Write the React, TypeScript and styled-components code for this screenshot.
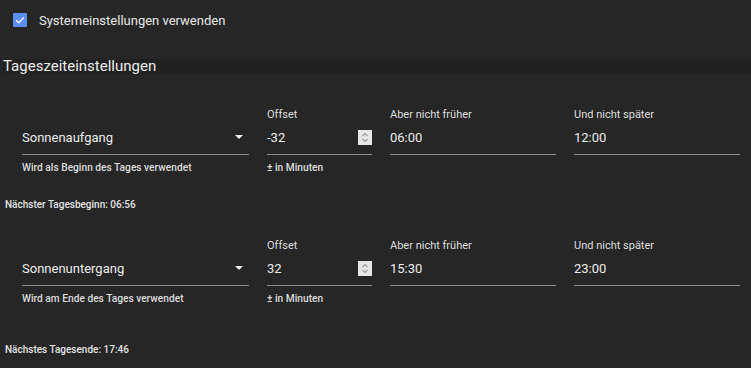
import React from "react";
import styled, { createGlobalStyle } from "styled-components";

const Global = createGlobalStyle`
  html, body { margin: 0; padding: 0; background: #262626; }
  body { font-family: Roboto, "Noto Sans", sans-serif; color: #e8e8e8; width: 751px; height: 368px; overflow: hidden; }
`;

const Page = styled.div`
  display: flex;
  flex-direction: column;
`;

const CheckRow = styled.label`
  display: flex;
  align-items: center;
  gap: 12px;
  padding: 13px 0 0 13px;
  height: 14px;
  font-size: 13px;
  color: #e6e6e6;
`;

const Box = styled.span`
  width: 14px;
  height: 14px;
  background: #5b8def;
  border-radius: 1px;
  display: flex;
  align-items: center;
  justify-content: center;
`;

const Heading = styled.div`
  margin: 32px 0 0 3px;
  height: 15px;
  line-height: 15px;
  font-size: 15px;
  background: #212121;
  color: #ececec;
`;

const Rows = styled.div<{ $top: number }>`
  display: grid;
  grid-template-columns: 227px 105px 166px 166px;
  column-gap: 18px;
  padding: 0 0 0 22px;
  margin-top: ${(p) => p.$top}px;
`;

const Field = styled.div`
  display: flex;
  flex-direction: column;
`;

const Label = styled.div`
  height: 16px;
  line-height: 18px;
  font-size: 11px;
  color: #dedede;
`;

const Control = styled.div`
  height: 30px;
  padding-bottom: 2px;
  border-bottom: 1px solid #8c8c8c;
  display: flex;
  align-items: center;
  justify-content: space-between;
  font-size: 13px;
  color: #ececec;
`;

const Helper = styled.div`
  margin-top: 6px;
  height: 14px;
  line-height: 14px;
  font-size: 10.2px;
  font-weight: 500;
  color: #dcdcdc;
`;

const Caret = styled.span`
  width: 0;
  height: 0;
  border-left: 4px solid transparent;
  border-right: 4px solid transparent;
  border-top: 4px solid #f0f0f0;
  margin-right: 6px;
`;

const Spinner = styled.span`
  width: 14px;
  height: 15px;
  background: #e6e6e6;
  display: flex;
  align-items: center;
  justify-content: center;
`;

const NextInfo = styled.div<{ $top: number }>`
  padding-left: 5px;
  margin-top: ${(p) => p.$top}px;
  height: 14px;
  line-height: 14px;
  font-size: 10px;
  font-weight: 500;
  color: #e4e4e4;
`;

type RowProps = {
  top: number;
  select: string;
  hint: string;
  offset: string;
  early: string;
  late: string;
};

function TimeRow({ top, select, hint, offset, early, late }: RowProps) {
  return (
    <Rows $top={top}>
      <Field>
        <Label />
        <Control>
          <span>{select}</span>
          <Caret />
        </Control>
        <Helper>{hint}</Helper>
      </Field>
      <Field>
        <Label>Offset</Label>
        <Control>
          <span>{offset}</span>
          <Spinner>
            <svg width="8" height="11" viewBox="0 0 8 11" fill="none" stroke="#9a9a9a" strokeWidth="1.2">
              <path d="M1.5 4 L4 1.5 L6.5 4" />
              <path d="M1.5 7 L4 9.5 L6.5 7" />
            </svg>
          </Spinner>
        </Control>
        <Helper>± in Minuten</Helper>
      </Field>
      <Field>
        <Label>Aber nicht früher</Label>
        <Control>
          <span>{early}</span>
        </Control>
      </Field>
      <Field>
        <Label>Und nicht später</Label>
        <Control>
          <span>{late}</span>
        </Control>
      </Field>
    </Rows>
  );
}

export default function App() {
  return (
    <Page>
      <Global />
      <CheckRow>
        <Box>
          <svg width="10" height="8" viewBox="0 0 10 8" fill="none" stroke="#f2f6ff" strokeWidth="1.4">
            <path d="M1 4.2 L3.8 6.8 L9 1.2" />
          </svg>
        </Box>
        <span>Systemeinstellungen verwenden</span>
      </CheckRow>
      <Heading>Tageszeiteinstellungen</Heading>
      <TimeRow
        top={32}
        select="Sonnenaufgang"
        hint="Wird als Beginn des Tages verwendet"
        offset="-32"
        early="06:00"
        late="12:00"
      />
      <NextInfo $top={23}>Nächster Tagesbeginn: 06:56</NextInfo>
      <TimeRow
        top={25}
        select="Sonnenuntergang"
        hint="Wird am Ende des Tages verwendet"
        offset="32"
        early="15:30"
        late="23:00"
      />
      <NextInfo $top={37}>Nächstes Tagesende: 17:46</NextInfo>
    </Page>
  );
}
